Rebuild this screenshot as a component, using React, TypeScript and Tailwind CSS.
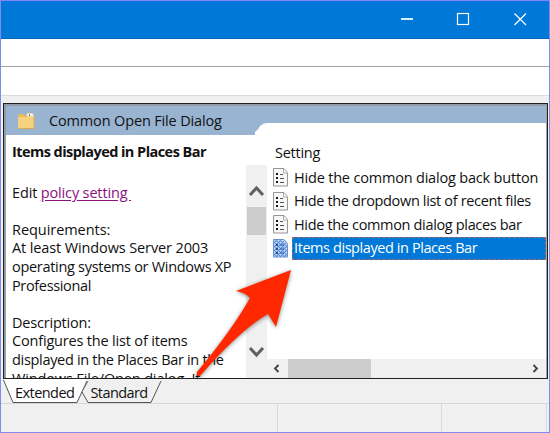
import type { ReactNode } from "react";

const settings = [
  { label: "Hide the common dialog back button", cls: "tracking-[-0.19px]" },
  { label: "Hide the dropdown list of recent files", cls: "tracking-[-0.34px]" },
  { label: "Hide the common dialog places bar", cls: "tracking-[-0.34px]" },
];

function Line({ children, className = "" }: { children?: ReactNode; className?: string }) {
  return (
    <div className="h-[18.6px]">
      <span className={"whitespace-pre " + className}>{children}</span>
    </div>
  );
}

function TitleBar() {
  return (
    <div className="flex h-[39px] shrink-0 items-start justify-end border-t-2 border-b border-t-[#0870f0] border-b-[#0567b8] bg-[#0078d7] text-white">
      <svg width="160" height="34" viewBox="0 0 160 34" fill="none" stroke="#fff" strokeWidth="1.2">
        <path d="M11 17h12" strokeWidth="2" stroke="#d5f1ff" />
        <rect x="67.5" y="11.5" width="11" height="11" />
        <path d="M124.500 11.500l11.500 11.500M136 11.500l-11.500 11.500" />
      </svg>
    </div>
  );
}

function FolderIcon() {
  return (
    <svg width="18" height="18" viewBox="0 0 18 18">
      <path d="M1 3.500L2 2h5l1 2h9v13H2L1 16z" fill="#e9bd5c" />
      <path d="M9 4l1-3h6l1 4z" fill="#f6f3e5" stroke="#b6ad94" strokeWidth=".6" />
      <path d="M12.500 2v2" stroke="#4f8ec0" />
      <path d="M1 5h8l1-1h7v13H2L1 16z" fill="#f5d180" />
      <path d="M2 16.500h15V5" fill="none" stroke="#d8aa4c" />
    </svg>
  );
}

function PageIcon({ selected = false }: { selected?: boolean }) {
  return (
    <svg width="17" height="19" viewBox="0 0 17 19" className="shrink-0">
      <path d="M1.500 .5h10.500l3.500 4v13.500h-14z" fill={selected ? "#c5dbf5" : "#f7f7f7"} stroke={selected ? "#6b91cb" : "#969696"} />
      {selected ? (
        <>
          <path
            d="M2 4l3-3M2 8l7-7M2 12L12 2M2 16L14 4M4 18L15 7M8 18l7-7M12 18l3-3"
            stroke="#5a8ed8"
            strokeWidth="1.200"
          />
          <path
            d="M2 15l3 3M2 11l7 7M2 7l11 11M2 3l13 13M4 1l11 11M8 1l7 7"
            stroke="#5a8ed8"
            strokeWidth=".9"
          />
          <path d="M4 5h2v2H4zm0 4h2v2H4zm0 4h2v2H4z" fill="#1e4a9c" />
          <path d="M8 6h4M8 10h4M8 14h4" stroke="#2459b0" strokeWidth="1.200" />
        </>
      ) : (
        <>
          <path d="M11.500 1v4h4" fill="#fff" stroke="#aaa" />
          <path d="M4 5h2v2H4zm0 4h2v2H4zm0 4h2v2H4z" fill="#161616" />
          <path d="M8 6.500h3M8 10.500h4M8 14.500h4" stroke="#505050" strokeWidth="1.200" />
        </>
      )}
    </svg>
  );
}

function Description() {
  return (
    <div className="w-[240px] overflow-hidden pt-[8px] pl-[6px] text-[14.5px] leading-[18.6px]">
      <Line className="font-bold tracking-[-0.55px]">Items displayed in Places Bar</Line>
      <div className="h-[22px]" />
      <Line className="tracking-[-0.15px]">
        Edit <span className="text-[#881280] underline underline-offset-2">policy setting </span>
      </Line>
      <Line />
      <Line className="tracking-[-0.05px]">Requirements:</Line>
      <Line className="tracking-[-0.12px]">At least Windows Server 2003</Line>
      <Line className="tracking-[-0.3px]">operating systems or Windows XP</Line>
      <Line className="tracking-[-0.35px]">Professional</Line>
      <Line />
      <Line className="tracking-[-0.2px]">Description:</Line>
      <Line className="tracking-[-0.18px]">Configures the list of items</Line>
      <Line className="tracking-[-0.31px]">displayed in the Places Bar in the</Line>
      <Line className="tracking-[-0.14px]">Windows File/Open dialog. It</Line>
    </div>
  );
}

function VerticalScroll() {
  return (
    <div className="mt-[30px] flex w-[21px] flex-col items-center bg-[#f0f0f0]">
      <svg width="21" height="42" viewBox="0 0 21 42">
        <path d="M4 30l6.500-7 6.500 7" fill="none" stroke="#606060" strokeWidth="3" />
      </svg>
      <div className="h-[28px] w-[19px] bg-[#cdcdcd]" />
      <div className="flex-1" />
      <svg width="21" height="36" viewBox="0 0 21 36">
        <path d="M4 6l6.500 7 6.500-7" fill="none" stroke="#606060" strokeWidth="3" />
      </svg>
    </div>
  );
}

function SettingsList() {
  return (
    <div className="flex min-w-0 flex-1 flex-col pt-[8px] text-[14.5px] leading-[20px]">
      <div className="h-[23px] pl-[8px] tracking-[-0.25px]">Setting</div>
      {settings.map((s) => (
        <div key={s.label} className="flex h-[23.5px] items-center pl-[5px]">
          <PageIcon />
          <span className={"ml-[5px] whitespace-nowrap " + s.cls}>{s.label}</span>
        </div>
      ))}
      <div className="flex h-[23.5px] items-center pl-[5px]">
        <PageIcon selected />
        <div className="ml-[3px] flex h-[23px] flex-1 items-center border border-dashed border-[#a5676b] bg-[#0078d7] pl-px tracking-[-0.42px] whitespace-nowrap text-white">
          Items displayed in Places Bar
        </div>
      </div>
      <div className="flex-1" />
      <div className="flex h-[19px] items-center justify-between bg-[#f0f0f0]">
        <svg width="21" height="19" viewBox="0 0 21 19" className="shrink-0">
          <path d="M11.500 6l-3.500 3.500 3.500 3.500" fill="none" stroke="#404040" strokeWidth="1.800" />
        </svg>
        <div className="h-full w-[83px] bg-[#cdcdcd]" />
        <div className="flex-1" />
        <svg width="20" height="19" viewBox="0 0 20 19">
          <path d="M7.500 6l3.500 3.500-3.500 3.500" fill="none" stroke="#404040" strokeWidth="1.800" />
        </svg>
      </div>
    </div>
  );
}

function Arrow() {
  return (
    <svg className="pointer-events-none absolute top-[260px] left-[185px] drop-shadow-[0_1px_2px_rgba(0,0,0,0.45)]" width="120" height="120" viewBox="185 260 120 120">
      <path d="M291 270L276 327L268 314Q240 330 200 376Q196 377 197 372Q232 330 250 298Q246 293 236 291Z" fill="#ff2800" />
    </svg>
  );
}

export default function App() {
  return (
    <div className="relative flex h-[433px] w-[550px] flex-col overflow-hidden bg-[#f0f0f0] font-['Open_Sans','Noto_Sans',sans-serif] text-[14.5px] text-[#111]">
      <TitleBar />
      <div className="h-[28px] shrink-0 border-b border-[#a0a0a0] bg-white" />
      <div className="h-[29px] shrink-0 border-b border-[#dcdcdc] bg-white" />
      <div className="h-[7px] shrink-0" />
      <div className="mr-[2px] ml-[3px] flex h-[276px] shrink-0 flex-col border border-[#202020] bg-white">
        <div className="flex min-h-0 flex-1 flex-col border-t-2 border-r border-l-2 border-[#929aa5] border-r-[#a5a5a5]">
          <div className="relative flex h-[29px] shrink-0 items-center bg-[#99b4d1] pl-[11px]">
            <FolderIcon />
            <span className="ml-[14px] tracking-[-0.15px] whitespace-nowrap">Common Open File Dialog</span>
            <svg className="absolute right-0 bottom-0" width="291" height="12" viewBox="0 0 291 12">
              <path d="M0 12V9Q4 6 5 3Q8 0 12 0H291V12Z" fill="white" />
            </svg>
          </div>
          <div className="flex min-h-0 flex-1">
            <Description />
            <VerticalScroll />
            <SettingsList />
          </div>
        </div>
      </div>
      <div className="grid h-[25px] shrink-0 border-b border-[#d7d7d7]">
        <svg width="165" height="25" viewBox="0 0 165 25" className="col-start-1 row-start-1 block">
          <path d="M3.500 0L13 23.500H77L87 0Z" fill="#fff" />
          <path d="M3.500 1L13 23.500H77L87 2M82 13L88 23.500H151L161 2" fill="none" stroke="#555" />
          <path d="M83 11l5-9" stroke="#777" />
        </svg>
        <div className="z-10 col-start-1 row-start-1 flex pt-[4px] pl-[15px] leading-[20px]">
          <span className="w-[75.5px] tracking-[-0.55px] whitespace-nowrap">Extended</span>
          <span className="tracking-[-0.6px] whitespace-nowrap">Standard</span>
        </div>
      </div>
      <div className="flex min-h-0 flex-1">
        <div className="w-[278px] border-r border-[#d9d9d9]" />
        <div className="w-[164px] border-r border-[#d9d9d9]" />
        <div className="w-[105px] border-r border-[#d9d9d9]" />
      </div>
      <Arrow />
      <div className="pointer-events-none absolute inset-0 border border-[#808cec]" />
    </div>
  );
}
